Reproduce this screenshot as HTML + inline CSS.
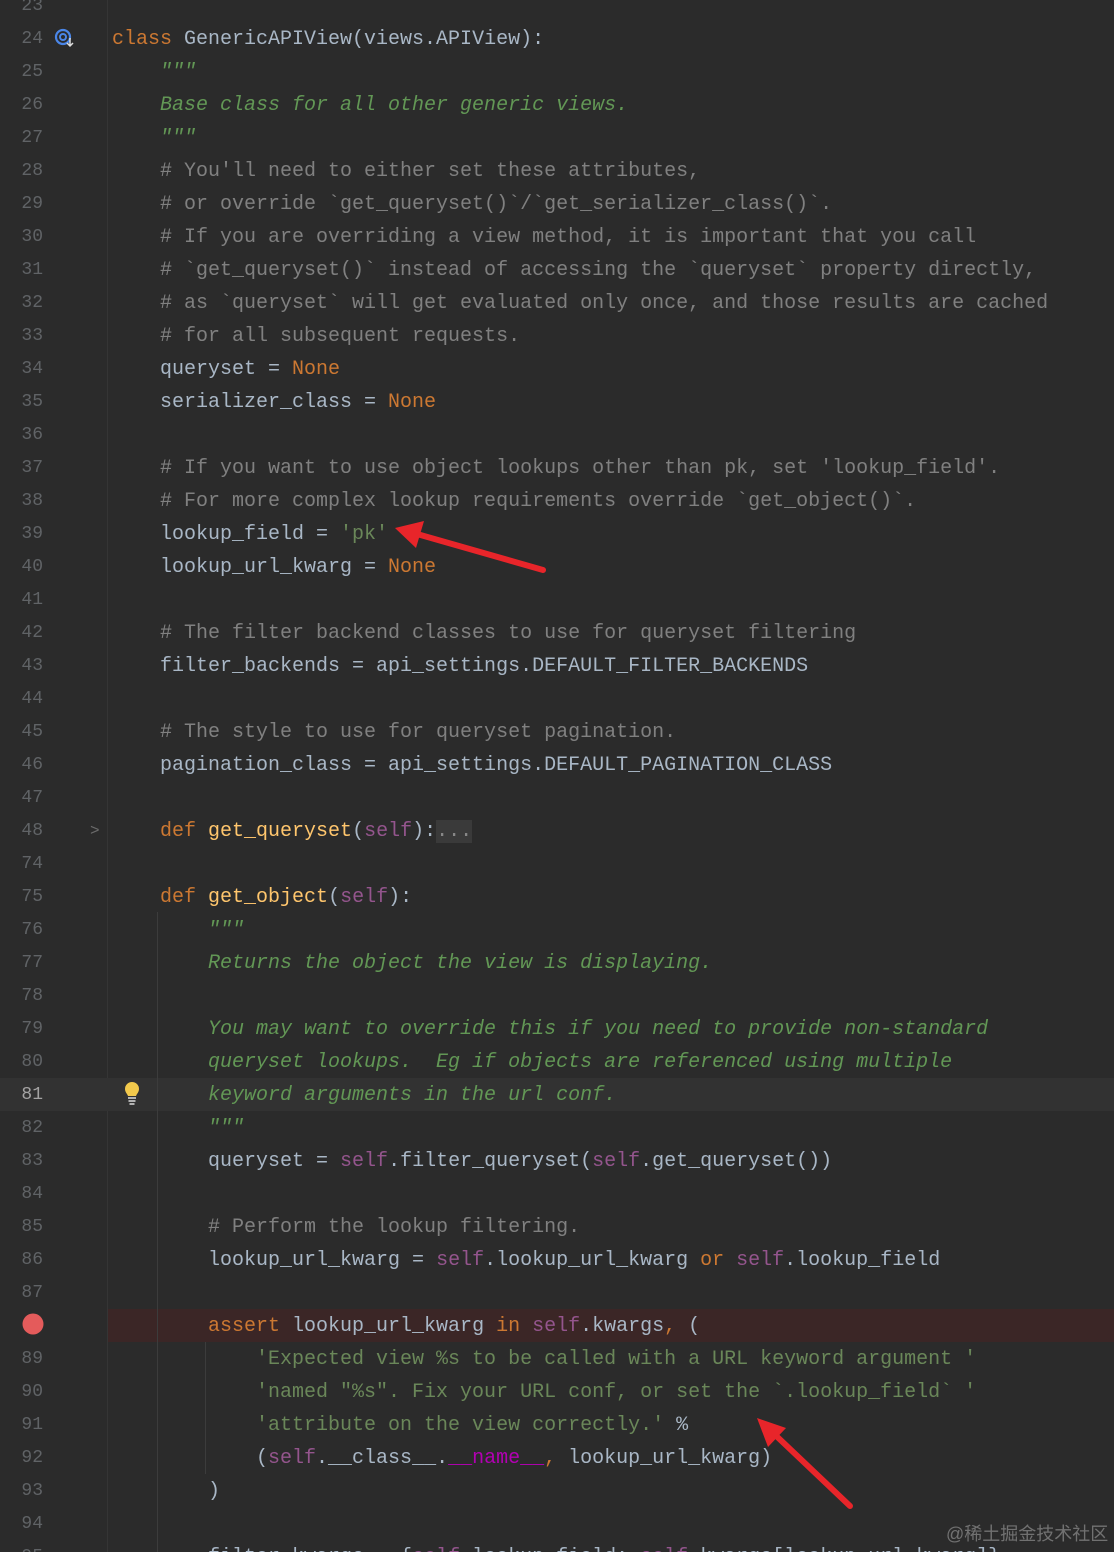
<!DOCTYPE html>
<html><head><meta charset="utf-8"><style>
html,body{margin:0;padding:0;background:#2b2b2b;width:1114px;height:1552px;overflow:hidden;position:relative}
.l{position:absolute;left:0;width:1114px;height:33px;line-height:33px;margin-top:2px;font-family:"Liberation Mono",monospace;font-size:20px;color:#a9b7c6;white-space:pre}
.n{position:absolute;left:0;width:43px;text-align:right;color:#606366;font-size:18px}
.c{position:absolute;left:112px}
.k{color:#cc7832}.cm{color:#808080}.d{color:#629755;font-style:italic}.s{color:#6a8759}.sf{color:#94558d}.f{color:#ffc66d}.m{color:#b200b2}
.gsep{position:absolute;left:107px;top:0;width:1px;height:1552px;background:#353535}
.g{position:absolute;width:1px;background:#3c3c3c}
</style></head><body>
<div class="gsep"></div>
<div style="position:absolute;left:0;top:1078px;width:1114px;height:33px;background:#323232"></div>
<div style="position:absolute;left:108px;top:1309px;width:1006px;height:33px;background:#3b2626"></div>
<div class="g" style="left:157px;top:912px;height:640px"></div>
<div class="g" style="left:205px;top:1342px;height:132px"></div>

<div class="l" style="top:-12px"><span class="n">23</span></div>
<div class="l" style="top:21px"><span class="n">24</span><span class="c"><span class="k">class </span>GenericAPIView(views.APIView):</span></div>
<div class="l" style="top:54px"><span class="n">25</span><span class="c d">    """</span></div>
<div class="l" style="top:87px"><span class="n">26</span><span class="c d">    Base class for all other generic views.</span></div>
<div class="l" style="top:120px"><span class="n">27</span><span class="c d">    """</span></div>
<div class="l" style="top:153px"><span class="n">28</span><span class="c cm">    # You'll need to either set these attributes,</span></div>
<div class="l" style="top:186px"><span class="n">29</span><span class="c cm">    # or override `get_queryset()`/`get_serializer_class()`.</span></div>
<div class="l" style="top:219px"><span class="n">30</span><span class="c cm">    # If you are overriding a view method, it is important that you call</span></div>
<div class="l" style="top:252px"><span class="n">31</span><span class="c cm">    # `get_queryset()` instead of accessing the `queryset` property directly,</span></div>
<div class="l" style="top:285px"><span class="n">32</span><span class="c cm">    # as `queryset` will get evaluated only once, and those results are cached</span></div>
<div class="l" style="top:318px"><span class="n">33</span><span class="c cm">    # for all subsequent requests.</span></div>
<div class="l" style="top:351px"><span class="n">34</span><span class="c">    queryset = <span class="k">None</span></span></div>
<div class="l" style="top:384px"><span class="n">35</span><span class="c">    serializer_class = <span class="k">None</span></span></div>
<div class="l" style="top:417px"><span class="n">36</span></div>
<div class="l" style="top:450px"><span class="n">37</span><span class="c cm">    # If you want to use object lookups other than pk, set 'lookup_field'.</span></div>
<div class="l" style="top:483px"><span class="n">38</span><span class="c cm">    # For more complex lookup requirements override `get_object()`.</span></div>
<div class="l" style="top:516px"><span class="n">39</span><span class="c">    lookup_field = <span class="s">'pk'</span></span></div>
<div class="l" style="top:549px"><span class="n">40</span><span class="c">    lookup_url_kwarg = <span class="k">None</span></span></div>
<div class="l" style="top:582px"><span class="n">41</span></div>
<div class="l" style="top:615px"><span class="n">42</span><span class="c cm">    # The filter backend classes to use for queryset filtering</span></div>
<div class="l" style="top:648px"><span class="n">43</span><span class="c">    filter_backends = api_settings.DEFAULT_FILTER_BACKENDS</span></div>
<div class="l" style="top:681px"><span class="n">44</span></div>
<div class="l" style="top:714px"><span class="n">45</span><span class="c cm">    # The style to use for queryset pagination.</span></div>
<div class="l" style="top:747px"><span class="n">46</span><span class="c">    pagination_class = api_settings.DEFAULT_PAGINATION_CLASS</span></div>
<div class="l" style="top:780px"><span class="n">47</span></div>
<div class="l" style="top:813px"><span class="n">48</span><span style="position:absolute;left:90px;color:#6b6b6b;font-size:16px">&gt;</span><span class="c">    <span class="k">def </span><span class="f">get_queryset</span>(<span class="sf">self</span>):<span style="background:#3a3a3a;color:#888">...</span></span></div>
<div class="l" style="top:846px"><span class="n">74</span></div>
<div class="l" style="top:879px"><span class="n">75</span><span class="c">    <span class="k">def </span><span class="f">get_object</span>(<span class="sf">self</span>):</span></div>
<div class="l" style="top:912px"><span class="n">76</span><span class="c d">        """</span></div>
<div class="l" style="top:945px"><span class="n">77</span><span class="c d">        Returns the object the view is displaying.</span></div>
<div class="l" style="top:978px"><span class="n">78</span></div>
<div class="l" style="top:1011px"><span class="n">79</span><span class="c d">        You may want to override this if you need to provide non-standard</span></div>
<div class="l" style="top:1044px"><span class="n">80</span><span class="c d">        queryset lookups.  Eg if objects are referenced using multiple</span></div>
<div class="l" style="top:1077px"><span class="n" style="color:#a4a3a3">81</span><span class="c d">        keyword arguments in the url conf.</span></div>
<div class="l" style="top:1110px"><span class="n">82</span><span class="c d">        """</span></div>
<div class="l" style="top:1143px"><span class="n">83</span><span class="c">        queryset = <span class="sf">self</span>.filter_queryset(<span class="sf">self</span>.get_queryset())</span></div>
<div class="l" style="top:1176px"><span class="n">84</span></div>
<div class="l" style="top:1209px"><span class="n">85</span><span class="c cm">        # Perform the lookup filtering.</span></div>
<div class="l" style="top:1242px"><span class="n">86</span><span class="c">        lookup_url_kwarg = <span class="sf">self</span>.lookup_url_kwarg <span class="k">or</span> <span class="sf">self</span>.lookup_field</span></div>
<div class="l" style="top:1275px"><span class="n">87</span></div>
<div class="l" style="top:1308px"><span class="c">        <span class="k">assert</span> lookup_url_kwarg <span class="k">in</span> <span class="sf">self</span>.kwargs<span class="k">,</span> (</span></div>
<div class="l" style="top:1341px"><span class="n">89</span><span class="c s">            'Expected view %s to be called with a URL keyword argument '</span></div>
<div class="l" style="top:1374px"><span class="n">90</span><span class="c s">            'named "%s". Fix your URL conf, or set the `.lookup_field` '</span></div>
<div class="l" style="top:1407px"><span class="n">91</span><span class="c"><span class="s">            'attribute on the view correctly.'</span> %</span></div>
<div class="l" style="top:1440px"><span class="n">92</span><span class="c">            (<span class="sf">self</span>.__class__.<span class="m">__name__</span><span class="k">,</span> lookup_url_kwarg)</span></div>
<div class="l" style="top:1473px"><span class="n">93</span><span class="c">        )</span></div>
<div class="l" style="top:1506px"><span class="n">94</span></div>
<div class="l" style="top:1539px"><span class="n">95</span><span class="c">        filter_kwargs = {<span class="sf">self</span>.lookup_field: <span class="sf">self</span>.kwargs[lookup_url_kwarg]}</span></div>

<svg style="position:absolute;left:0;top:0" width="1114" height="1552">
<circle cx="63" cy="37" r="7" fill="none" stroke="#4a86e8" stroke-width="2.2"/>
<circle cx="63" cy="37" r="3" fill="none" stroke="#4a86e8" stroke-width="2"/>
<path d="M70 38 v8 M67 43 l3 3 l3 -3" stroke="#ddd" stroke-width="1.5" fill="none"/>
<circle cx="33" cy="1324" r="10.5" fill="#e45b5b"/>
<path d="M132 1082 a7 7 0 0 1 7 7 c0 3 -2 4.5 -3 7 h-8 c-1 -2.5 -3 -4 -3 -7 a7 7 0 0 1 7 -7z" fill="#f2c94c"/>
<path d="M128 1098 h8 M128.5 1101 h7 M129.5 1104 h5" stroke="#ddd" stroke-width="1.5"/>
<line x1="543" y1="570" x2="410" y2="532" stroke="#e8252a" stroke-width="6" stroke-linecap="round"/>
<polygon points="395,528 424,521 416,548" fill="#e8252a"/>
<line x1="850" y1="1506" x2="770" y2="1430" stroke="#e8252a" stroke-width="6" stroke-linecap="round"/>
<polygon points="757,1418 786,1428 768,1447" fill="#e8252a"/>
</svg>
<div style="position:absolute;left:946px;top:1520px;font-family:'Liberation Sans','Noto Sans CJK SC',sans-serif;font-size:18px;color:rgba(200,200,200,0.45)">@稀土掘金技术社区</div>
</body></html>
